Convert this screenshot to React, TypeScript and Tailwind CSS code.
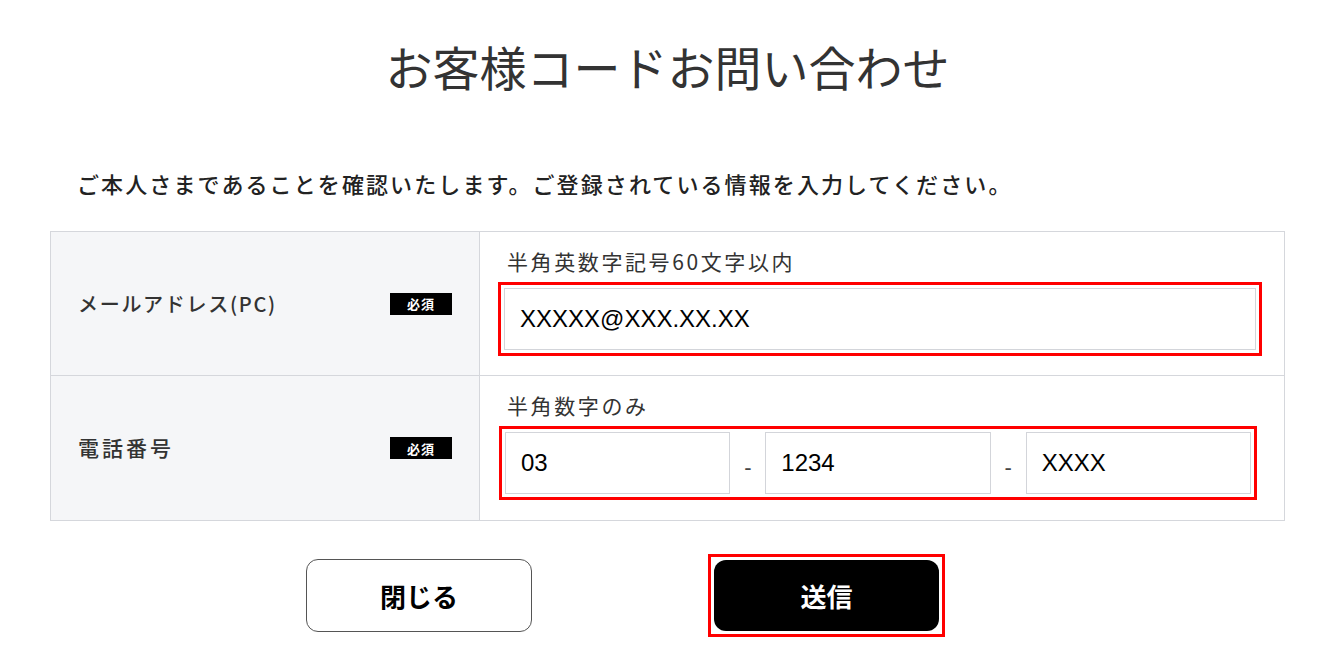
const jp = "font-['Noto_Sans_CJK_JP',sans-serif]";
const latin = "font-['Liberation_Sans','Noto_Sans_CJK_JP',sans-serif]";

const Badge = () => (
  <span className="flex h-[22px] w-[62px] items-center justify-center bg-black text-[13px] font-bold leading-none tracking-[1px] text-white">
    必須
  </span>
);

const Field = ({ value }: { value: string }) => (
  <div
    className={`flex h-[62px] flex-1 items-center border border-[#d3d5da] bg-white pl-[15px] text-[24px] text-black ${latin}`}
  >
    {value}
  </div>
);

const Dash = () => (
  <span className={`w-[35px] pt-[8px] text-center text-[22px] text-[#444] ${latin}`}>-</span>
);

const App = () => {
  return (
    <div className={`min-h-[659px] w-full bg-white ${jp}`}>
      {/* Title */}
      <h1 className="pt-[42px] text-center text-[47px] font-normal leading-none text-[#333]">
        お客様コードお問い合わせ
      </h1>

      <div className="px-[50px]">
        {/* Intro */}
        <p className="mt-[83px] pl-[27px] text-[22px] font-medium leading-none tracking-[2.1px] text-[#222]">
          ご本人さまであることを確認いたします。ご登録されている情報を入力してください。
        </p>

        {/* Form table */}
        <div className="mt-[37px] border border-[#d5d7dc]">
          {/* Email row */}
          <div className="flex h-[144px] border-b border-[#d5d7dc]">
            <div className="flex w-[429px] items-center justify-between border-r border-[#d5d7dc] bg-[#f5f6f8] pl-[27px] pr-[27px]">
              <span className="text-[20px] font-medium tracking-[1.7px] text-[#333]">メールアドレス(PC)</span>
              <Badge />
            </div>
            <div className="flex flex-1 flex-col pl-[18px] pr-[22px] pt-[17px]">
              <p className="pl-[9px] text-[21px] leading-[24px] tracking-[2.6px] text-[#333]">半角英数字記号60文字以内</p>
              <div className="mt-[9px] flex border-[3px] border-[#ff0000] p-[3px]">
                <Field value="XXXXX@XXX.XX.XX" />
              </div>
            </div>
          </div>

          {/* Phone row */}
          <div className="flex h-[144px]">
            <div className="flex w-[429px] items-center justify-between border-r border-[#d5d7dc] bg-[#f5f6f8] pl-[27px] pr-[27px]">
              <span className="text-[21px] font-medium tracking-[3px] text-[#333]">電話番号</span>
              <Badge />
            </div>
            <div className="flex flex-1 flex-col pl-[19px] pr-[27px] pt-[17px]">
              <p className="pl-[8px] text-[21px] leading-[24px] tracking-[2.6px] text-[#333]">半角数字のみ</p>
              <div className="mt-[9px] flex items-center border-[3px] border-[#ff0000] p-[3px]">
                <Field value="03" />
                <Dash />
                <Field value="1234" />
                <Dash />
                <Field value="XXXX" />
              </div>
            </div>
          </div>
        </div>

        {/* Buttons */}
        <div className="mt-[33px] flex items-center pl-[256px]">
          <button className="flex h-[73px] w-[226px] items-center justify-center rounded-[12px] border border-[#555] bg-white text-[26px] font-bold text-black">
            閉じる
          </button>
          <div className="ml-[176px] border-[3px] border-[#ff0000] p-[3px]">
            <button className="flex h-[71px] w-[225px] items-center justify-center rounded-[12px] bg-black text-[26px] font-bold text-white">
              送信
            </button>
          </div>
        </div>
      </div>
    </div>
  );
};

export default App;
